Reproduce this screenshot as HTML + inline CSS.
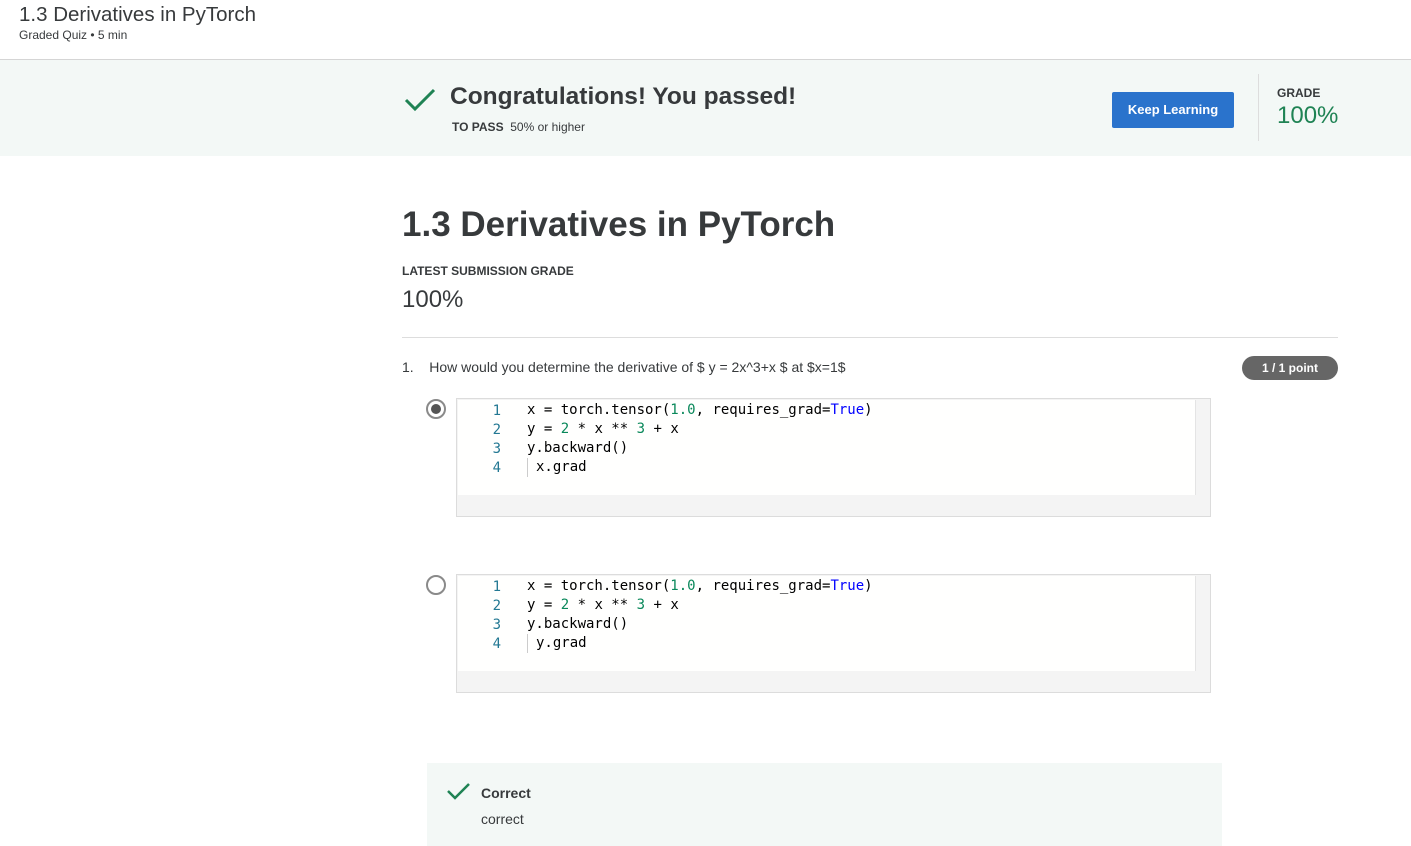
<!DOCTYPE html>
<html><head><meta charset="utf-8"><style>
*{margin:0;padding:0;box-sizing:border-box}
body{width:1411px;height:846px;overflow:hidden;background:#fff;font-family:"Liberation Sans",sans-serif;color:#373a3c;position:relative}
.a{position:absolute}
.code{font-family:"DejaVu Sans Mono",monospace;font-size:14px;line-height:19px;color:#000}
.ln{position:absolute;left:29px;width:14px;text-align:right;color:#237893}
.cl{position:absolute;left:69px;white-space:pre}
.n{color:#09885a}.k{color:#0000ff}
.box{position:absolute;left:456px;width:755px;height:119px;border:1px solid #dcdcdc;background:#f4f4f4}
.inner{position:absolute;left:1px;top:1px;width:738px;height:95px;background:#fffffe;border-right:1px solid #e4e4e4}
.radio{position:absolute;left:426px;width:20px;height:20px;border-radius:50%;border:2px solid #8a8a8a;background:#fff}
</style></head><body>
<div class="a" style="left:19px;top:3px;font-size:20.5px;color:#373a3c">1.3 Derivatives in PyTorch</div>
<div class="a" style="left:19px;top:28px;font-size:12px">Graded Quiz • 5 min</div>
<div class="a" style="left:0;top:59px;width:1411px;height:1px;background:#d5d5d5"></div>
<div class="a" style="left:0;top:60px;width:1411px;height:96px;background:#f3f8f6"></div>
<svg class="a" style="left:404px;top:88px" width="32" height="24" viewBox="0 0 32 24"><path d="M2 12 L11 21 L30 2" fill="none" stroke="#1f8354" stroke-width="3"/></svg>
<div class="a" style="left:450px;top:83px;font-size:24.5px;font-weight:bold;color:#373a3c">Congratulations! You passed!</div>
<div class="a" style="left:452px;top:120px;font-size:12px"><b>TO PASS</b>&nbsp; 50% or higher</div>
<div class="a" style="left:1112px;top:92px;width:122px;height:36px;background:#2a73cc;border-radius:2px;color:#fff;font-size:13px;font-weight:bold;text-align:center;line-height:36px">Keep Learning</div>
<div class="a" style="left:1258px;top:74px;width:1px;height:67px;background:#ddd"></div>
<div class="a" style="left:1277px;top:86px;font-size:12px;font-weight:bold">GRADE</div>
<div class="a" style="left:1277px;top:102px;font-size:24px;color:#1f8354">100%</div>
<div class="a" style="left:402px;top:205px;font-size:35px;font-weight:bold;color:#373a3c">1.3 Derivatives in PyTorch</div>
<div class="a" style="left:402px;top:264px;font-size:12px;font-weight:bold">LATEST SUBMISSION GRADE</div>
<div class="a" style="left:402px;top:286px;font-size:24px">100%</div>
<div class="a" style="left:402px;top:337px;width:936px;height:1px;background:#ddd"></div>
<div class="a" style="left:402px;top:359px;font-size:14px">1.&nbsp;&nbsp;&nbsp;&nbsp;How would you determine the derivative of $ y = 2x^3+x $ at $x=1$</div>
<div class="a" style="left:1242px;top:356px;width:96px;height:24px;border-radius:12px;background:#666;color:#fff;font-size:12px;font-weight:bold;text-align:center;line-height:24px">1 / 1 point</div>

<div class="radio" style="top:399px"><div style="position:absolute;left:3px;top:3px;width:10px;height:10px;border-radius:50%;background:#555"></div></div>
<div class="box code" style="top:398px"><div class="inner">
<div class="ln" style="top:2px">1</div><div class="cl" style="top:1px">x = torch.tensor(<span class="n">1.0</span>, requires_grad=<span class="k">True</span>)</div>
<div class="ln" style="top:21px">2</div><div class="cl" style="top:20px">y = <span class="n">2</span> * x ** <span class="n">3</span> + x</div>
<div class="ln" style="top:40px">3</div><div class="cl" style="top:39px">y.backward()</div>
<div class="ln" style="top:59px">4</div><div class="cl" style="top:58px;border-left:1px solid #ccc;padding-left:8px">x.grad</div>
</div></div>

<div class="radio" style="top:575px"></div>
<div class="box code" style="top:574px"><div class="inner">
<div class="ln" style="top:2px">1</div><div class="cl" style="top:1px">x = torch.tensor(<span class="n">1.0</span>, requires_grad=<span class="k">True</span>)</div>
<div class="ln" style="top:21px">2</div><div class="cl" style="top:20px">y = <span class="n">2</span> * x ** <span class="n">3</span> + x</div>
<div class="ln" style="top:40px">3</div><div class="cl" style="top:39px">y.backward()</div>
<div class="ln" style="top:59px">4</div><div class="cl" style="top:58px;border-left:1px solid #ccc;padding-left:8px">y.grad</div>
</div></div>

<div class="a" style="left:427px;top:763px;width:795px;height:83px;background:#f3f8f6"></div>
<svg class="a" style="left:447px;top:782px" width="24" height="18" viewBox="0 0 24 18"><path d="M1 9 L8 16 L22 2" fill="none" stroke="#1f8354" stroke-width="2.5"/></svg>
<div class="a" style="left:481px;top:785px;font-size:14px;font-weight:bold">Correct</div>
<div class="a" style="left:481px;top:811px;font-size:14px">correct</div>
</body></html>
